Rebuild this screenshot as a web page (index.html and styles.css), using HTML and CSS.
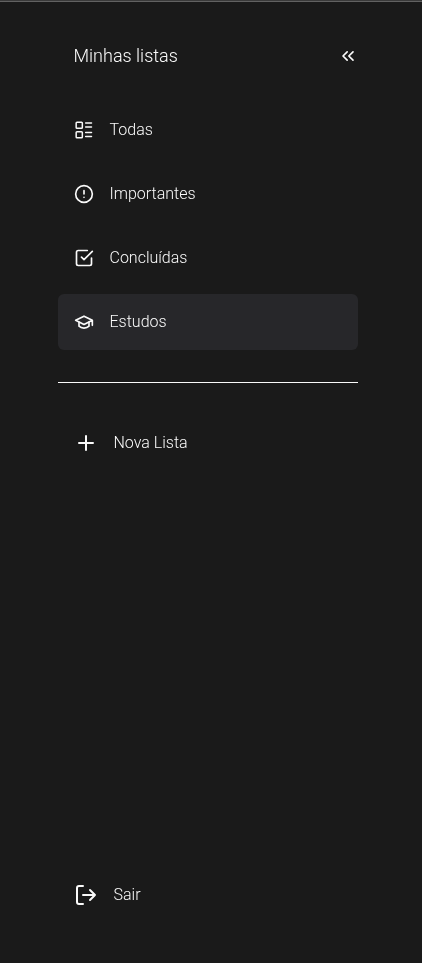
FILE: index.html
```html
<!DOCTYPE html>
<html lang="pt-BR">
<head>
<meta charset="utf-8">
<title>Minhas listas</title>
<link rel="stylesheet" href="styles.css">
</head>
<body>
<aside class="sidebar">
  <header class="header">
    <h1 class="title">Minhas listas</h1>
    <svg class="icon" viewBox="0 0 24 24"><path d="m11 17-5-5 5-5M18 17l-5-5 5-5"/></svg>
  </header>
  <nav class="lists">
    <a class="item"><svg class="icon thin" viewBox="0 0 24 24"><rect x="2.6" y="2.6" width="7.4" height="7.4" rx="1"/><rect x="2.6" y="14" width="7.4" height="7.4" rx="1"/><path d="M14 3.6h7M14 8.4h7M14 15h7M14 19.8h7"/></svg><span>Todas</span></a>
    <a class="item"><svg class="icon" viewBox="0 0 24 24"><circle cx="12" cy="12" r="10"/><path d="M12 8v4M12 16h.01"/></svg><span>Importantes</span></a>
    <a class="item"><svg class="icon" viewBox="0 0 24 24"><path d="m9 11 3 3L22 4"/><path d="M21 12v7a2 2 0 0 1-2 2H5a2 2 0 0 1-2-2V5a2 2 0 0 1 2-2h11"/></svg><span>Concluídas</span></a>
    <a class="item active"><svg class="icon" viewBox="0 0 24 24"><path d="M22 10v6M2 10l10-5 10 5-10 5z"/><path d="M6 12v5c3 3 9 3 12 0v-5"/></svg><span>Estudos</span></a>
  </nav>
  <hr class="divider">
  <a class="action"><svg class="icon large" viewBox="0 0 24 24"><path d="M5 12h14M12 5v14"/></svg><span>Nova Lista</span></a>
  <a class="action exit"><svg class="icon large" viewBox="0 0 24 24"><path d="M9 21H5a2 2 0 0 1-2-2V5a2 2 0 0 1 2-2h4M16 17l5-5-5-5M21 12H9"/></svg><span>Sair</span></a>
</aside>
</body>
</html>
```
FILE: styles.css
```css
* { box-sizing: border-box; }
body {
  margin: 0;
  background: #1a1a1a;
  color: #fafafa;
  font: 300 16px/24px Roboto, sans-serif;
}
.sidebar {
  display: flex;
  flex-direction: column;
  height: 963px;
  padding: 41px 64px 40px 58px;
  border-top: 1px solid #3a3a3a;
  box-shadow: inset 0 1px #626262;
  will-change: transform;
}
.header {
  display: flex;
  align-items: center;
  justify-content: space-between;
  height: 28px;
  padding-left: 15.5px;
}
.title { margin: 0; font-size: 18px; line-height: 28px; font-weight: 300; }
.icon {
  flex: none;
  width: 20px;
  height: 20px;
  fill: none;
  stroke: currentColor;
  stroke-width: 2;
  stroke-linecap: round;
  stroke-linejoin: round;
}
.large { width: 24px; height: 24px; }
.thin { stroke-width: 1.8; }
.lists { display: flex; flex-direction: column; gap: 8px; margin-top: 32px; }
.item, .action {
  display: flex;
  align-items: center;
  gap: 15.5px;
  height: 56px;
  padding: 0 16px;
}
.item { border-radius: 6px; }
.active { background: #27272a; }
.divider { width: 100%; height: 1px; margin: 32px 0; border: 0; background: #fafafa; }
.exit { margin-top: auto; }
```
